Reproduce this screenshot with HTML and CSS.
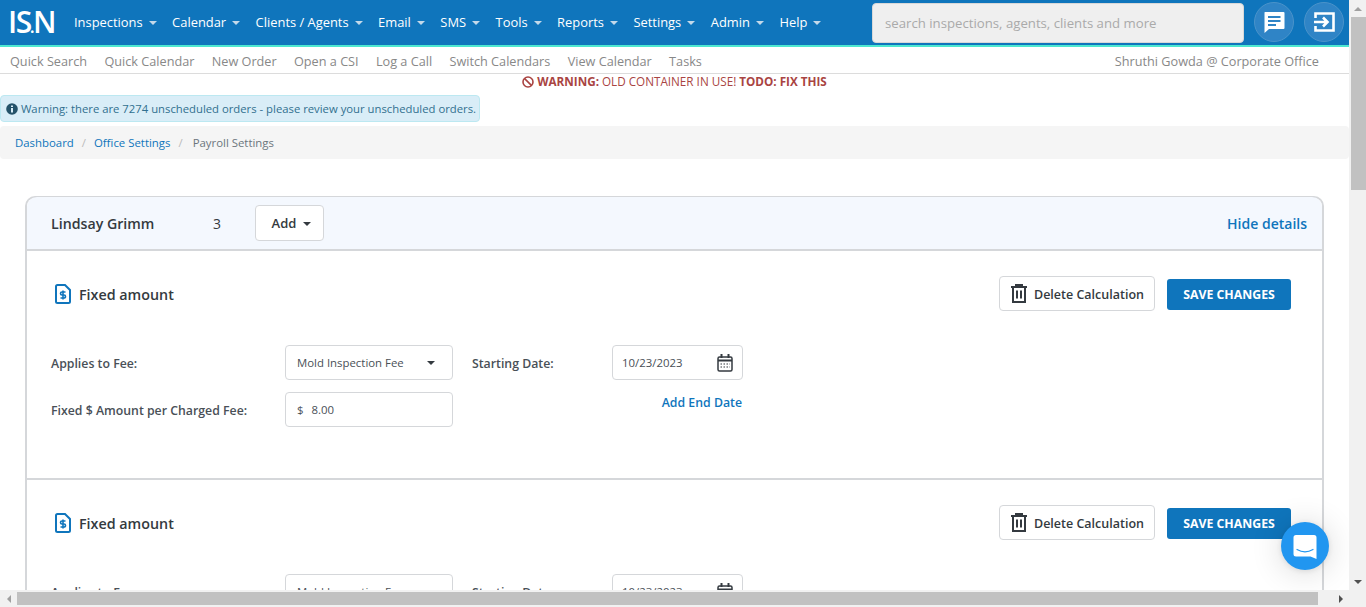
FILE: index.html
```html
<!DOCTYPE html>
<html lang="en">
<head>
<meta charset="utf-8">
<title>Payroll Settings</title>
<link rel="stylesheet" href="styles.css">
</head>
<body>
<div class="page">
  <header class="topbar">
    <div class="logo">I<span class="logo-s">S</span><span class="logo-dot">.</span>N</div>
    <nav class="mainnav">
      <a>Inspections<i class="caret"></i></a>
      <a>Calendar<i class="caret"></i></a>
      <a>Clients / Agents<i class="caret"></i></a>
      <a>Email<i class="caret"></i></a>
      <a>SMS<i class="caret"></i></a>
      <a>Tools<i class="caret"></i></a>
      <a>Reports<i class="caret"></i></a>
      <a>Settings<i class="caret"></i></a>
      <a>Admin<i class="caret"></i></a>
      <a>Help<i class="caret"></i></a>
    </nav>
    <div class="search">search inspections, agents, clients and more</div>
    <button class="round">
      <svg width="24" height="24" viewBox="0 0 24 24"><path fill="#fff" d="M3 2h18.500a1 1 0 0 1 1 1v15a1 1 0 0 1-1 1H7l-4.500 4V3a1 1 0 0 1 .5-1z"/><path fill="#2f84c6" d="M6 6h12.500v2H6zM6 10h12.500v2H6zM6 14h8v2H6z"/></svg>
    </button>
    <button class="round">
      <svg width="24" height="24" viewBox="0 0 24 24" fill="none" stroke="#fff" stroke-width="2.600"><path d="M3.500 8V3.500h18v17h-18V16"/><path d="M2 12h13M11 7.500l4.500 4.500-4.500 4.500"/></svg>
    </button>
  </header>
  <div class="subnav">
    <a>Quick Search</a><a>Quick Calendar</a><a>New Order</a><a>Open a CSI</a><a>Log a Call</a><a>Switch Calendars</a><a>View Calendar</a><a>Tasks</a>
    <span class="user">Shruthi Gowda @ Corporate Office</span>
  </div>
  <div class="container-warning">
    <svg width="12" height="12" viewBox="0 0 12 12" fill="none" stroke="#a94442" stroke-width="1.600"><circle cx="6" cy="6" r="5"/><path d="M2.600 2.600l6.800 6.800"/></svg>
    <b>WARNING:</b> OLD CONTAINER IN USE! <b>TODO: FIX THIS</b>
  </div>
  <div class="alert">
    <svg width="12" height="12" viewBox="0 0 12 12"><circle cx="6" cy="6" r="5.800" fill="#245269"/><path fill="#d9edf7" d="M5 2.500h2v1.600H5zM5 5h2v4.500H5z"/></svg>
    Warning: there are 7274 unscheduled orders - please review your unscheduled orders.
  </div>
  <div class="crumbs"><a>Dashboard</a><span class="sep">/</span><a>Office Settings</a><span class="sep">/</span><span class="cur">Payroll Settings</span></div>

  <section class="card">
    <div class="card-head">
      <span class="person">Lindsay Grimm</span>
      <span class="count">3</span>
      <button class="add">Add<i class="caret dark"></i></button>
      <a class="hide">Hide details</a>
    </div>
    <div class="calc">
      <div class="calc-head">
        <svg class="doc" width="16" height="20" viewBox="0 0 16 20" fill="none" stroke="#0f75bc" stroke-width="2"><path d="M2.500 1h7.500l5 5v11.500a1.500 1.500 0 0 1-1.500 1.500h-11A1.500 1.500 0 0 1 1 17.500v-15A1.500 1.500 0 0 1 2.500 1z"/><path stroke-width="1.600" d="M10.500 8H7a1.200 1.200 0 0 0 0 3h2a1.200 1.200 0 0 1 0 3H5.500M8 6.500v9"/></svg>
        <h3>Fixed amount</h3>
        <button class="del">
          <svg width="16" height="19" viewBox="0 0 16 19" fill="none" stroke="#343a40" stroke-width="2"><path d="M0 3h16M5 3V1h6v2M2 3v15h12V3M6 6.500v8M10 6.500v8"/></svg>
          Delete Calculation
        </button>
        <button class="save">SAVE CHANGES</button>
      </div>
      <div class="form">
        <label>Applies to Fee:</label>
        <div class="field select">Mold Inspection Fee<i class="caret dark"></i></div>
        <label class="lbl2">Starting Date:</label>
        <div class="field date">10/23/2023
          <svg width="16" height="18" viewBox="0 0 16 18" fill="none" stroke="#343a40" stroke-width="1.500"><rect x="1" y="3" width="14" height="14" rx="1.500"/><path stroke-width="2" d="M1 6.500h14M4.500 0v4M11.500 0v4"/><path stroke-width="1.200" stroke-dasharray="1.500 1.500" d="M3.500 10h9.500M3.500 13h9.500"/></svg>
        </div>
        <label>Fixed $ Amount per Charged Fee:</label>
        <div class="field money"><span class="dollar">$</span>8.00</div>
        <span class="gap"></span>
        <a class="enddate">Add End Date</a>
      </div>
    </div>
    <div class="calc">
      <div class="calc-head">
        <svg class="doc" width="16" height="20" viewBox="0 0 16 20" fill="none" stroke="#0f75bc" stroke-width="2"><path d="M2.500 1h7.500l5 5v11.500a1.500 1.500 0 0 1-1.500 1.500h-11A1.500 1.500 0 0 1 1 17.500v-15A1.500 1.500 0 0 1 2.500 1z"/><path stroke-width="1.600" d="M10.500 8H7a1.200 1.200 0 0 0 0 3h2a1.200 1.200 0 0 1 0 3H5.500M8 6.500v9"/></svg>
        <h3>Fixed amount</h3>
        <button class="del">
          <svg width="16" height="19" viewBox="0 0 16 19" fill="none" stroke="#343a40" stroke-width="2"><path d="M0 3h16M5 3V1h6v2M2 3v15h12V3M6 6.500v8M10 6.500v8"/></svg>
          Delete Calculation
        </button>
        <button class="save">SAVE CHANGES</button>
      </div>
      <div class="form">
        <label>Applies to Fee:</label>
        <div class="field select">Mold Inspection Fee<i class="caret dark"></i></div>
        <label class="lbl2">Starting Date:</label>
        <div class="field date">10/23/2023
          <svg width="16" height="18" viewBox="0 0 16 18" fill="none" stroke="#343a40" stroke-width="1.500"><rect x="1" y="3" width="14" height="14" rx="1.500"/><path stroke-width="2" d="M1 6.500h14M4.500 0v4M11.500 0v4"/><path stroke-width="1.200" stroke-dasharray="1.500 1.500" d="M3.500 10h9.500M3.500 13h9.500"/></svg>
        </div>
      </div>
    </div>
  </section>
</div>

<button class="chat" aria-label="Chat">
  <svg width="24" height="27" viewBox="0 0 24 27"><path fill="#fff" d="M3 1h18a2.500 2.500 0 0 1 2.500 2.500V25l-6-2.500H3A2.500 2.500 0 0 1 .5 20V3.500A2.500 2.500 0 0 1 3 1z"/><path fill="none" stroke="#2196f0" stroke-width="1.200" stroke-linecap="round" d="M4 15.500c5 3 11 3 16 0"/></svg>
</button>
<div class="vscroll"><i class="up"></i><div class="vtrack"><b></b></div><i class="down"></i></div>
<div class="hscroll"><i class="left"></i><div class="htrack"><b></b></div><i class="right"></i></div>
</body>
</html>
```

FILE: styles.css
```css
* { box-sizing: border-box; }
html, body { margin: 0; height: 100%; overflow: hidden; background: #fff; }
body { font-family: "Open Sans", "Noto Sans", sans-serif; color: #343a40; }
button { font: inherit; cursor: pointer; }
a { text-decoration: none; }

.page { width: 1349px; height: 590px; overflow: hidden; }

.topbar { height: 47px; background: #0f75bc; border-bottom: 2px solid #4de8d0; display: flex; align-items: flex-start; padding-left: 9px; }
.logo { width: 65px; height: 45px; color: #fff; font: 600 30px/43px "Open Sans", sans-serif; letter-spacing: -1.500px; white-space: nowrap; flex: none; margin-left: -1px; }
.logo-s { letter-spacing: -2.500px; }
.logo-dot { font-size: 18px; letter-spacing: -1.500px; }
.mainnav { display: flex; gap: 15.500px; width: 798px; flex: none; padding-top: 13px; font-size: 12.900px; line-height: 19px; color: #fff; margin-left: 1px; }
.mainnav a { white-space: nowrap; }
.caret { display: inline-block; width: 0; height: 0; margin-left: 6px; vertical-align: 2px; border: 4px solid transparent; border-top-color: #c3d9ea; border-bottom: 0; }
.caret.dark { border-top-color: #343a40; }
.search { width: 372px; height: 40px; margin-top: 3px; flex: none; background: #efefef; border: 1px solid #d8d8d8; border-radius: 4px; color: #aaa; font-size: 13.200px; line-height: 38px; padding-left: 12px; }
.round { width: 40px; height: 40px; margin: 2px 0 0 10px; padding: 0; border-radius: 50%; border: 1px solid #4a93ca; background: #2f84c6; display: flex; align-items: center; justify-content: center; flex: none; }

.subnav { height: 27px; border-bottom: 1px solid #dcdcdc; display: flex; gap: 17.300px; padding: 0 30px 0 10px; font-size: 12.700px; line-height: 29px; color: #888; white-space: nowrap; }
.user { margin-left: auto; }

.container-warning { height: 16px; text-align: center; font-size: 11.700px; line-height: 15px; color: #a94442; }
.container-warning svg { vertical-align: -2px; }
.container-warning b { font-weight: 700; }

.alert { width: 480px; height: 27px; margin-top: 5px; background: #d9edf7; border: 1px solid #bce8f1; border-radius: 4px; font-size: 11.300px; line-height: 25px; color: #31708f; padding-left: 5px; white-space: nowrap; }
.alert svg { vertical-align: -2px; }

.crumbs { height: 33px; margin-top: 4px; background: #f5f5f5; border-radius: 4px; padding-left: 15px; font-size: 11.400px; line-height: 33px; display: flex; }
.crumbs a { color: #0f75bc; }
.crumbs .sep { color: #bbb; padding: 0 8px; }
.crumbs .cur { color: #6c757d; padding-left: 2px; }

.card { width: 1299px; margin: 37px 0 0 25px; border: 2px solid #d5d7da; border-bottom: 0; border-radius: 10px 10px 0 0; }
.card-head { height: 54px; margin: -1px 0 0; background: #f4f8fe; border-bottom: 2px solid #d5d7da; border-radius: 10px 10px 0 0; display: flex; align-items: center; padding: 0 15px 0 24px; font-size: 14px; }
.person { width: 162px; font-weight: 600; font-size: 14.200px; white-space: nowrap; }
.count { width: 42px; }
.add { width: 69px; height: 36px; background: #fff; border: 1px solid #d5d7da; border-radius: 4px; font-weight: 600; font-size: 13px; color: #343a40; padding: 0 0 0 4px; }
.add .caret { margin-left: 7px; }
.hide { margin-left: auto; color: #0f75bc; font-weight: 600; font-size: 14px; }

.calc { height: 229px; border-bottom: 2px solid #d5d7da; padding: 25px 31px 0 24px; }
.calc-head { display: flex; align-items: center; height: 35px; }
.doc { flex: none; margin: 0 8px 0 4px; }
.calc-head h3 { margin: 0; padding-top: 1px; font-size: 14.300px; font-weight: 600; }
.del { margin-left: auto; width: 156px; height: 35px; background: #fff; border: 1px solid #d5d7da; border-radius: 4px; font-size: 12.500px; font-weight: 600; color: #343a40; padding: 2px 0 0 1px; display: flex; align-items: center; justify-content: center; gap: 7px; white-space: nowrap; }
.del svg { margin-top: -2px; }
.save { margin: 2px 0 0 12px; width: 124px; height: 31px; background: #0f75bc; border: 0; border-radius: 3px; color: #fff; font-size: 12.300px; font-weight: 700; padding: 0; white-space: nowrap; }

.form { display: grid; grid-template-columns: 234px 168px 159px 131px; grid-auto-rows: 35px; row-gap: 12px; margin-top: 34px; align-items: center; }
.form label { font-size: 12.300px; font-weight: 600; color: #495057; white-space: nowrap; padding-top: 2px; }
.lbl2 { padding-left: 19px; }
.field { height: 35px; border: 1px solid #d5d7da; border-radius: 4px; font-size: 11.400px; line-height: 33px; color: #495057; padding-left: 11px; display: flex; align-items: center; }
.select { justify-content: space-between; padding-right: 17px; }
.date { justify-content: space-between; padding: 0 9px; }
.dollar { margin-right: 8px; }
.enddate { color: #0f75bc; font-size: 12.300px; font-weight: 600; text-align: right; align-self: start; padding: 2px 1px 0 0; }

.chat { position: fixed; left: 1281px; top: 522px; width: 48px; height: 48px; border: 0; border-radius: 50%; background: #2196f0; box-shadow: 0 1px 6px rgba(0,0,0,.1), 0 2px 32px rgba(0,0,0,.16); display: flex; align-items: center; justify-content: center; padding: 2px 0 0; }

.vscroll { position: fixed; left: 1349px; top: 0; width: 17px; height: 590px; background: #f1f1f1; display: flex; flex-direction: column; }
.vtrack { flex: 1; }
.vtrack b { display: block; height: 173px; margin-left: 2px; background: #c1c1c1; }
.hscroll { position: fixed; left: 0; top: 590px; width: 1366px; height: 17px; background: #f1f1f1; display: flex; padding-right: 17px; }
.htrack { flex: 1; }
.htrack b { display: block; width: 1301px; height: 13px; margin-top: 2px; background: #c1c1c1; }
.vscroll i, .hscroll i { flex: none; width: 17px; height: 17px; display: flex; align-items: center; justify-content: center; }
.vscroll i::after, .hscroll i::after { content: ""; border: 4px solid transparent; }
.up::after { border-bottom-color: #a0a0a0 !important; border-top: 0 !important; }
.down::after { border-top-color: #505050 !important; border-bottom: 0 !important; }
.left::after { border-right-color: #a0a0a0 !important; border-left: 0 !important; }
.right::after { border-left-color: #505050 !important; border-right: 0 !important; }
```
